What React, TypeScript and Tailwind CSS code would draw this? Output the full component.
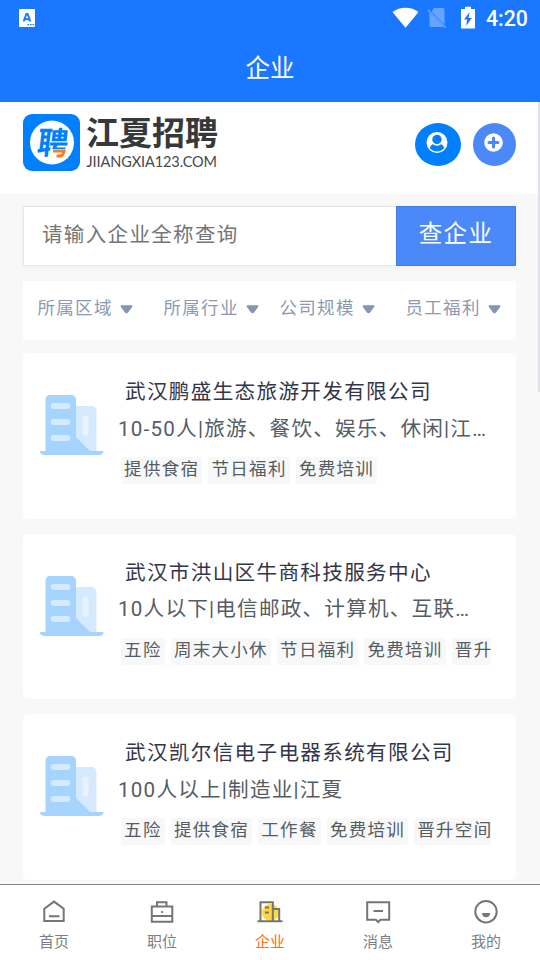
import React from 'react';

interface Company {
  name: string;
  summary: string;
  tags: string[];
}

const companies: Company[] = [
  {
    name: '武汉鹏盛生态旅游开发有限公司',
    summary: '10-50人|旅游、餐饮、娱乐、休闲|江夏',
    tags: ['提供食宿', '节日福利', '免费培训'],
  },
  {
    name: '武汉市洪山区牛商科技服务中心',
    summary: '10人以下|电信邮政、计算机、互联网|江夏',
    tags: ['五险', '周末大小休', '节日福利', '免费培训', '晋升空间'],
  },
  {
    name: '武汉凯尔信电子电器系统有限公司',
    summary: '100人以上|制造业|江夏',
    tags: ['五险', '提供食宿', '工作餐', '免费培训', '晋升空间'],
  },
];

const StatusBar = () => (
  <div className="flex h-9 items-center text-white">
    <svg className="ml-[19px] h-[18px] w-4" viewBox="0 0 16 18">
      <rect width="16" height="18" rx="1" fill="#fff" />
      <path d="M4.600 12.500 7.400 5h1.200l2.800 7.500M5.600 10.300h4.800" fill="none" stroke="#1978ff" strokeWidth="1.900" />
      <path d="M8.300 15.700h1.600M11 15.700h1.600M13.600 15.700h1.600" stroke="#1978ff" strokeWidth="1.300" />
    </svg>
    <svg className="ml-[357px] mt-[-1px] h-[21px] w-[27px]" viewBox="0 0 27 21">
      <path d="M.5 5C8-.8 19-.8 26.500 5L13.500 20.700Z" fill="#fff" />
    </svg>
    <svg className="ml-[8px] mt-px h-[22px] w-[20px]" viewBox="0 0 20 22">
      <path d="M7 0h9a1.500 1.500 0 0 1 1.500 1.500v15L4.500 3.500ZM2.500 4.500 17 19H4a1.500 1.500 0 0 1-1.500-1.500Z" fill="#65a5ff" />
      <path d="m.8 1.700 18 18" stroke="#65a5ff" strokeWidth="1.500" />
    </svg>
    <svg className="ml-[14px] -mt-[2px] h-[23px] w-[14px]" viewBox="0 0 14 23">
      <path d="M0 3h4V.8h6V3h4v19.500H0Z" fill="#fff" />
      <path d="M8.500 6 3 13.500h3.200L5.200 20l5.600-8H7.500Z" fill="#1978ff" />
    </svg>
    <span className="ml-[11px] mt-[2px] font-[Roboto] text-[21.300px] font-medium leading-6">4:20</span>
  </div>
);

const Logo = () => (
  <svg className="h-[58px] w-[196px]" viewBox="0 0 196 58">
    <rect width="57" height="57" rx="9" fill="#007fff" />
    <circle cx="29" cy="28.500" r="22" fill="#fff" />
    <text
      x="18"
      y="40"
      transform="skewX(-7)"
      fontSize="31"
      className="font-['Noto_Sans_CJK_SC',sans-serif] font-bold"
      fill="#007fff"
    >
      聘
    </text>
    <path d="M27.500 35h17v10h-17Z" fill="#fff" />
    <path d="M30 37H41l-.8 2.500q-.6 2.500-3.200 2.500h-3.500" fill="none" stroke="#ff7a24" strokeWidth="3" />
    <text
      x="63"
      y="31"
      fontSize="33"
      textLength="132"
      className="font-['Noto_Sans_CJK_SC',sans-serif] font-bold"
      fill="#353939"
    >
      江夏招聘
    </text>
    <text x="63.500" y="53" fontSize="14.500" textLength="130.500" className="font-[Lato]" fill="#454949">
      JIIANGXIA123.COM
    </text>
  </svg>
);

const FilterItem: React.FC<{ label: string; className: string }> = ({ label, className }) => (
  <button className={`flex items-center text-[17.5px] leading-6 tracking-[1.300px] text-[#8c9ab1] ${className}`}>
    <span className="-mt-[5px]">{label}</span>
    <svg className="-mt-[2px] ml-[7px] h-[11px] w-[13px]" viewBox="0 0 13 11">
      <path
        d="M1.400 2.200h10.200L7.600 7.700Q6.500 9 5.400 7.700Z"
        fill="#8496b1"
        stroke="#8496b1"
        strokeWidth="1.700"
        strokeLinejoin="round"
      />
    </svg>
  </button>
);

const BuildingIcon = () => (
  <svg className="mt-[42px] h-[60px] w-16 shrink-0" viewBox="0.5 0 64 60">
    <path d="M36 11h16a5 5 0 0 1 5 5v41H36Z" fill="#d6eaff" />
    <rect x="43" y="20.500" width="6" height="20" rx="3" fill="#e8f3ff" />
    <path
      d="M6 56V4.500A4.500 4.500 0 0 1 10.500 0H32a4.500 4.500 0 0 1 4.500 4.500V42l14 14h13.500q0 4-5 4H5.500q-5 0-5-4Z"
      fill="#a7d3ff"
    />
    <path d="M14.200 11h13.600M14.200 27h13.600M14.200 43h13.600" stroke="#d6eaff" strokeWidth="6" strokeLinecap="round" />
  </svg>
);

const CompanyCard: React.FC<{ company: Company }> = ({ company }) => (
  <div className="flex h-[165.500px] rounded-[5px] bg-white pl-[17px] pr-[25px]">
    <BuildingIcon />
    <div className="ml-[14px] min-w-0 flex-1 pt-[23px]">
      <h2 className="ml-[7px] whitespace-nowrap text-[20.600px] leading-8 tracking-[1.320px] text-[#333648]">
        {company.name}
      </h2>
      <p className="mr-1 mt-[4.500px] truncate text-[20.600px] leading-8 tracking-[1.220px] text-[#555c64]">
        {company.summary}
      </p>
      <div className="ml-[3px] mt-[12.500px] flex gap-[6px] overflow-hidden">
        {company.tags.map((tag) => (
          <span
            key={tag}
            className="h-[27px] shrink-0 rounded-[3px] bg-[#f8f8f8] px-[3.100px] text-[17.500px] leading-[25px] tracking-[1.300px] text-[#555c64]"
          >
            {tag}
          </span>
        ))}
      </div>
    </div>
  </div>
);

const tabs = [
  {
    label: '首页',
    icon: <path d="M2.300 8.700 12 1.600l9.700 7.100v12.300H2.300ZM7 16.200h10.500" />,
  },
  {
    label: '职位',
    icon: (
      <>
        <path d="M1.800 6.500h20.500v15.300H1.800ZM1.800 16h20.500M7 6.500V2.200h9.500v4.300" />
        <path d="M11.200 12H13" />
      </>
    ),
  },
  {
    label: '企业',
    icon: (
      <>
        <circle cx="12.500" cy="12.500" r="8.500" fill="#ffd83d" stroke="none" />
        <path d="M-.5 21.200h25M2.500 21.200V2.200h12.300v19M14.800 9h6.400v12.200" />
        <path d="M7 7.500h4M7 12.500h4" />
      </>
    ),
  },
  {
    label: '消息',
    icon: <path d="M1.200 2.200h22v17.500h-8.700L12.200 22 9.900 19.700H1.200ZM7.500 11h9.500" />,
  },
  {
    label: '我的',
    icon: (
      <>
        <circle cx="12" cy="11.700" r="10.700" />
        <path d="M8 13h8.200q-.3 4.200-4.100 4.200T8 13Z" fill="#777" stroke="none" />
      </>
    ),
  },
];

const TabBar = () => (
  <nav className="grid h-[76px] shrink-0 grid-cols-5 border-t border-[#858585] bg-white">
    {tabs.map((tab) => (
      <button key={tab.label} className="flex flex-col items-center pt-[15px]">
        <svg className="h-6 w-6 overflow-visible" viewBox="0 0 24 24" fill="none" stroke="#757575" strokeWidth="2">
          {tab.icon}
        </svg>
        <span
          className={`mt-[8px] text-[15px] leading-5 ${tab.label === '企业' ? 'text-[#ff6c0a]' : 'text-[#7c7f84]'}`}
        >
          {tab.label}
        </span>
      </button>
    ))}
  </nav>
);

export default function App() {
  return (
    <div className="relative flex h-[960px] w-[540px] flex-col overflow-hidden bg-[#f8f8f8] font-[Roboto,'Noto_Sans_CJK_SC',sans-serif]">
      <header className="h-[102px] shrink-0 bg-[#1978ff]">
        <StatusBar />
        <h1 className="pt-[17px] text-center text-[24.500px] leading-8 text-white">企业</h1>
      </header>

      <div className="flex h-[92px] shrink-0 items-start bg-white pl-[23px] pr-6 pt-3">
        <Logo />
        <div className="ml-auto mt-[9px] flex gap-3">
          <button className="flex h-[43px] w-[46px] justify-center rounded-[50%] bg-[#007fff] pt-[8px]">
            <svg className="mr-[2px] h-[22px] w-[22px]" viewBox="0 0 22 22">
              <circle cx="11" cy="11.500" r="10.500" fill="#fff" />
              <circle cx="11" cy="8.500" r="4.700" fill="#007fff" />
              <path d="M4 17.200q.6-3.700 3.500-4.200 3.500 2.500 7 0 2.900.5 3.500 4.200a9.200 9.200 0 0 1-14 0Z" fill="#007fff" />
              <path d="M7 12.600q4 3 8 0" fill="none" stroke="#fff" strokeWidth="1.300" />
            </svg>
          </button>
          <button className="flex h-[43px] w-[43px] justify-center rounded-full bg-[#4b88f8] pt-[10px]">
            <svg className="mr-[2px] h-[19px] w-[19px]" viewBox="0 0 19 19">
              <circle cx="9.500" cy="9.500" r="9.300" fill="#fff" />
              <path d="M9.500 5v9M5 9.500h9" stroke="#4b88f8" strokeWidth="3" strokeLinecap="round" />
            </svg>
          </button>
        </div>
      </div>

      <main className="min-h-0 flex-1 overflow-hidden pl-[23px] pr-6 pt-3">
        <div className="flex h-[60px] shadow-[0_1px_6px_rgba(0,0,0,0.04)]">
          <div className="flex-1 border border-r-0 border-[#e6e6e6] bg-white pl-[18px] text-[20.500px] leading-[57px] tracking-[1.350px] text-[#757575]">
            请输入企业全称查询
          </div>
          <button className="w-[120px] border border-[#407cea] bg-[#4b88f8] pb-[3px] text-[23.500px] tracking-[1.300px] text-white">
            查企业
          </button>
        </div>

        <div className="mt-[15px] flex h-[59px] items-center bg-white pl-[14.500px]">
          <FilterItem label="所属区域" className="w-[126px]" />
          <FilterItem label="所属行业" className="w-[116px]" />
          <FilterItem label="公司规模" className="w-[126px]" />
          <FilterItem label="员工福利" className="" />
        </div>

        <div className="mt-[13px] flex flex-col gap-[15px]">
          {companies.map((company) => (
            <CompanyCard key={company.name} company={company} />
          ))}
        </div>
      </main>

      <TabBar />

      {/* page scroll thumb */}
      <div className="absolute right-0 top-[102px] h-[290px] w-[2px] bg-[#dfe3e8]" />
    </div>
  );
}
